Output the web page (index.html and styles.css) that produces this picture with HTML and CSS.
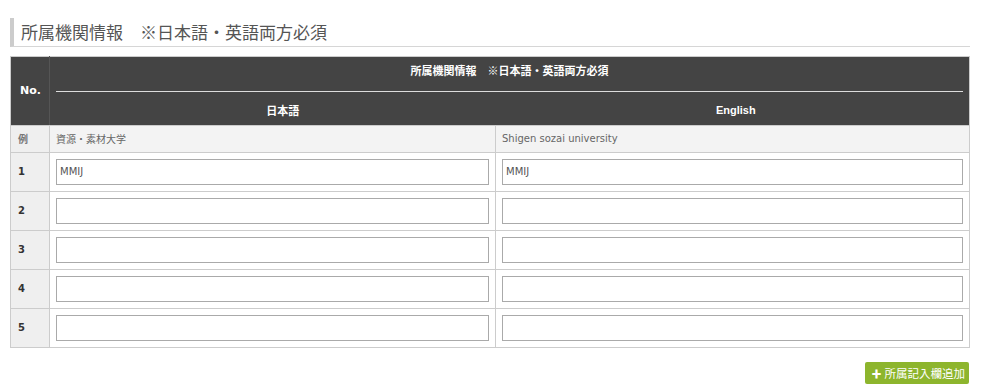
FILE: index.html
```html
<html>

<head>
	<title>所属機関情報</title>
	<link rel="stylesheet" href="styles.css">
</head>

<body>
	<div class="wrap">
		<h2 class="heading">所属機関情報　※日本語・英語両方必須</h2>

		<table class="affil">
			<colgroup>
				<col class="col-no">
				<col class="col-ja">
				<col class="col-en">
			</colgroup>
			<thead>
				<tr>
					<th class="no" rowspan="2">No.</th>
					<th class="title" colspan="2"><div>所属機関情報　※日本語・英語両方必須</div></th>
				</tr>
				<tr>
					<th class="lang ja">日本語</th>
					<th class="lang en">English</th>
				</tr>
			</thead>
			<tbody>
				<tr class="example">
					<td class="no">例</td>
					<td>資源・素材大学</td>
					<td>Shigen sozai university</td>
				</tr>
				<tr>
					<td class="no">1</td>
					<td><input type="text" name="ja1" value="MMIJ" /></td>
					<td><input type="text" name="en1" value="MMIJ" /></td>
				</tr>
				<tr>
					<td class="no">2</td>
					<td><input type="text" name="ja2" /></td>
					<td><input type="text" name="en2" /></td>
				</tr>
				<tr>
					<td class="no">3</td>
					<td><input type="text" name="ja3" /></td>
					<td><input type="text" name="en3" /></td>
				</tr>
				<tr>
					<td class="no">4</td>
					<td><input type="text" name="ja4" /></td>
					<td><input type="text" name="en4" /></td>
				</tr>
				<tr>
					<td class="no">5</td>
					<td><input type="text" name="ja5" /></td>
					<td><input type="text" name="en5" /></td>
				</tr>
			</tbody>
		</table>

		<div class="actions">
			<button type="button" class="add"><span class="plus">✚</span>所属記入欄追加</button>
		</div>
	</div>
</body>

</html>
```

FILE: styles.css
```css
html {
	font-family: "Liberation Sans", "Noto Sans CJK JP", sans-serif;
}

body {
	margin: 0;
	background: #fff;
}

.wrap {
	width: 960px;
	margin: 0 10px;
	padding-top: 18px;
}

.heading {
	margin: 0;
	height: 29px;
	line-height: 27px;
	padding-left: 7px;
	border-left: 4px solid #ccc;
	border-bottom: 1px solid #d6d6d6;
	font-family: "Noto Sans CJK JP", sans-serif;
	font-size: 17px;
	font-weight: normal;
	color: #555;
	box-sizing: border-box;
}

.affil {
	width: 100%;
	margin-top: 9px;
	border-collapse: collapse;
	table-layout: fixed;
	font-size: 10px;
	color: #555;
}

.col-no {
	width: 39px;
}

.col-ja {
	width: 446px;
}

.affil th,
.affil td {
	border: 1px solid #ccc;
	padding: 0 6px;
}

.affil thead th {
	background: #444;
	color: #fff;
	font-family: "Liberation Sans", "Noto Sans CJK JP", sans-serif;
	font-size: 11px;
	font-weight: bold;
	border-color: #555;
}

.affil th.no {
	padding: 0 0 0 9px;
	text-align: left;
	font-family: "DejaVu Sans", sans-serif;
	font-size: 11px;
	border-left-color: #ccc;
	border-top-color: #ccc;
	border-bottom-color: #ccc;
}

.affil th.title {
	height: 35px;
	padding: 0 6px;
	border-bottom: 0;
	border-right-color: #ccc;
	border-top-color: #ccc;
}

.affil th.title div {
	height: 34px;
	line-height: 28px;
	border-bottom: 1px solid #ddd;
}

.affil th.lang {
	height: 33px;
	padding-top: 3px;
	border-top: 0;
	border-bottom-color: #ccc;
	border-left: 0;
	border-right: 0;
}

.affil th.ja {
	padding-left: 26px;
}

.affil th.en {
	padding-left: 13px;
	border-right: 1px solid #ccc;
}

.affil td.no {
	background: #efefef;
	font-family: "DejaVu Sans", sans-serif;
	font-size: 10px;
	font-weight: bold;
	color: #333;
	padding-left: 7px;
}

.affil tbody tr {
	height: 39px;
}

.affil tr.example {
	height: 27px;
	background: #f3f3f3;
}

.affil tr.example td {
	font-family: "DejaVu Sans", "Noto Sans CJK JP", sans-serif;
	font-size: 10px;
	color: #666;
}

.affil tr.example td.no {
	font-family: "Noto Sans CJK JP", sans-serif;
	color: #777;
}

.affil input[type="text"] {
	display: block;
	width: 100%;
	height: 26px;
	box-sizing: border-box;
	border: 1px solid #aaa;
	padding: 0 3px;
	font-family: "DejaVu Sans", sans-serif;
	font-size: 10px;
	color: #555;
	background: #fff;
}

.actions {
	display: flex;
	justify-content: flex-end;
	margin-top: 14px;
	padding-right: 1px;
}

.add {
	height: 22px;
	padding: 0 4px 0 7px;
	border: 0;
	border-radius: 2px;
	background: #8db52d;
	color: #fff;
	font-family: "Noto Sans CJK JP", sans-serif;
	font-size: 11.5px;
	cursor: pointer;
}

.add .plus {
	font-size: 10px;
	margin-right: 3px;
}
```
